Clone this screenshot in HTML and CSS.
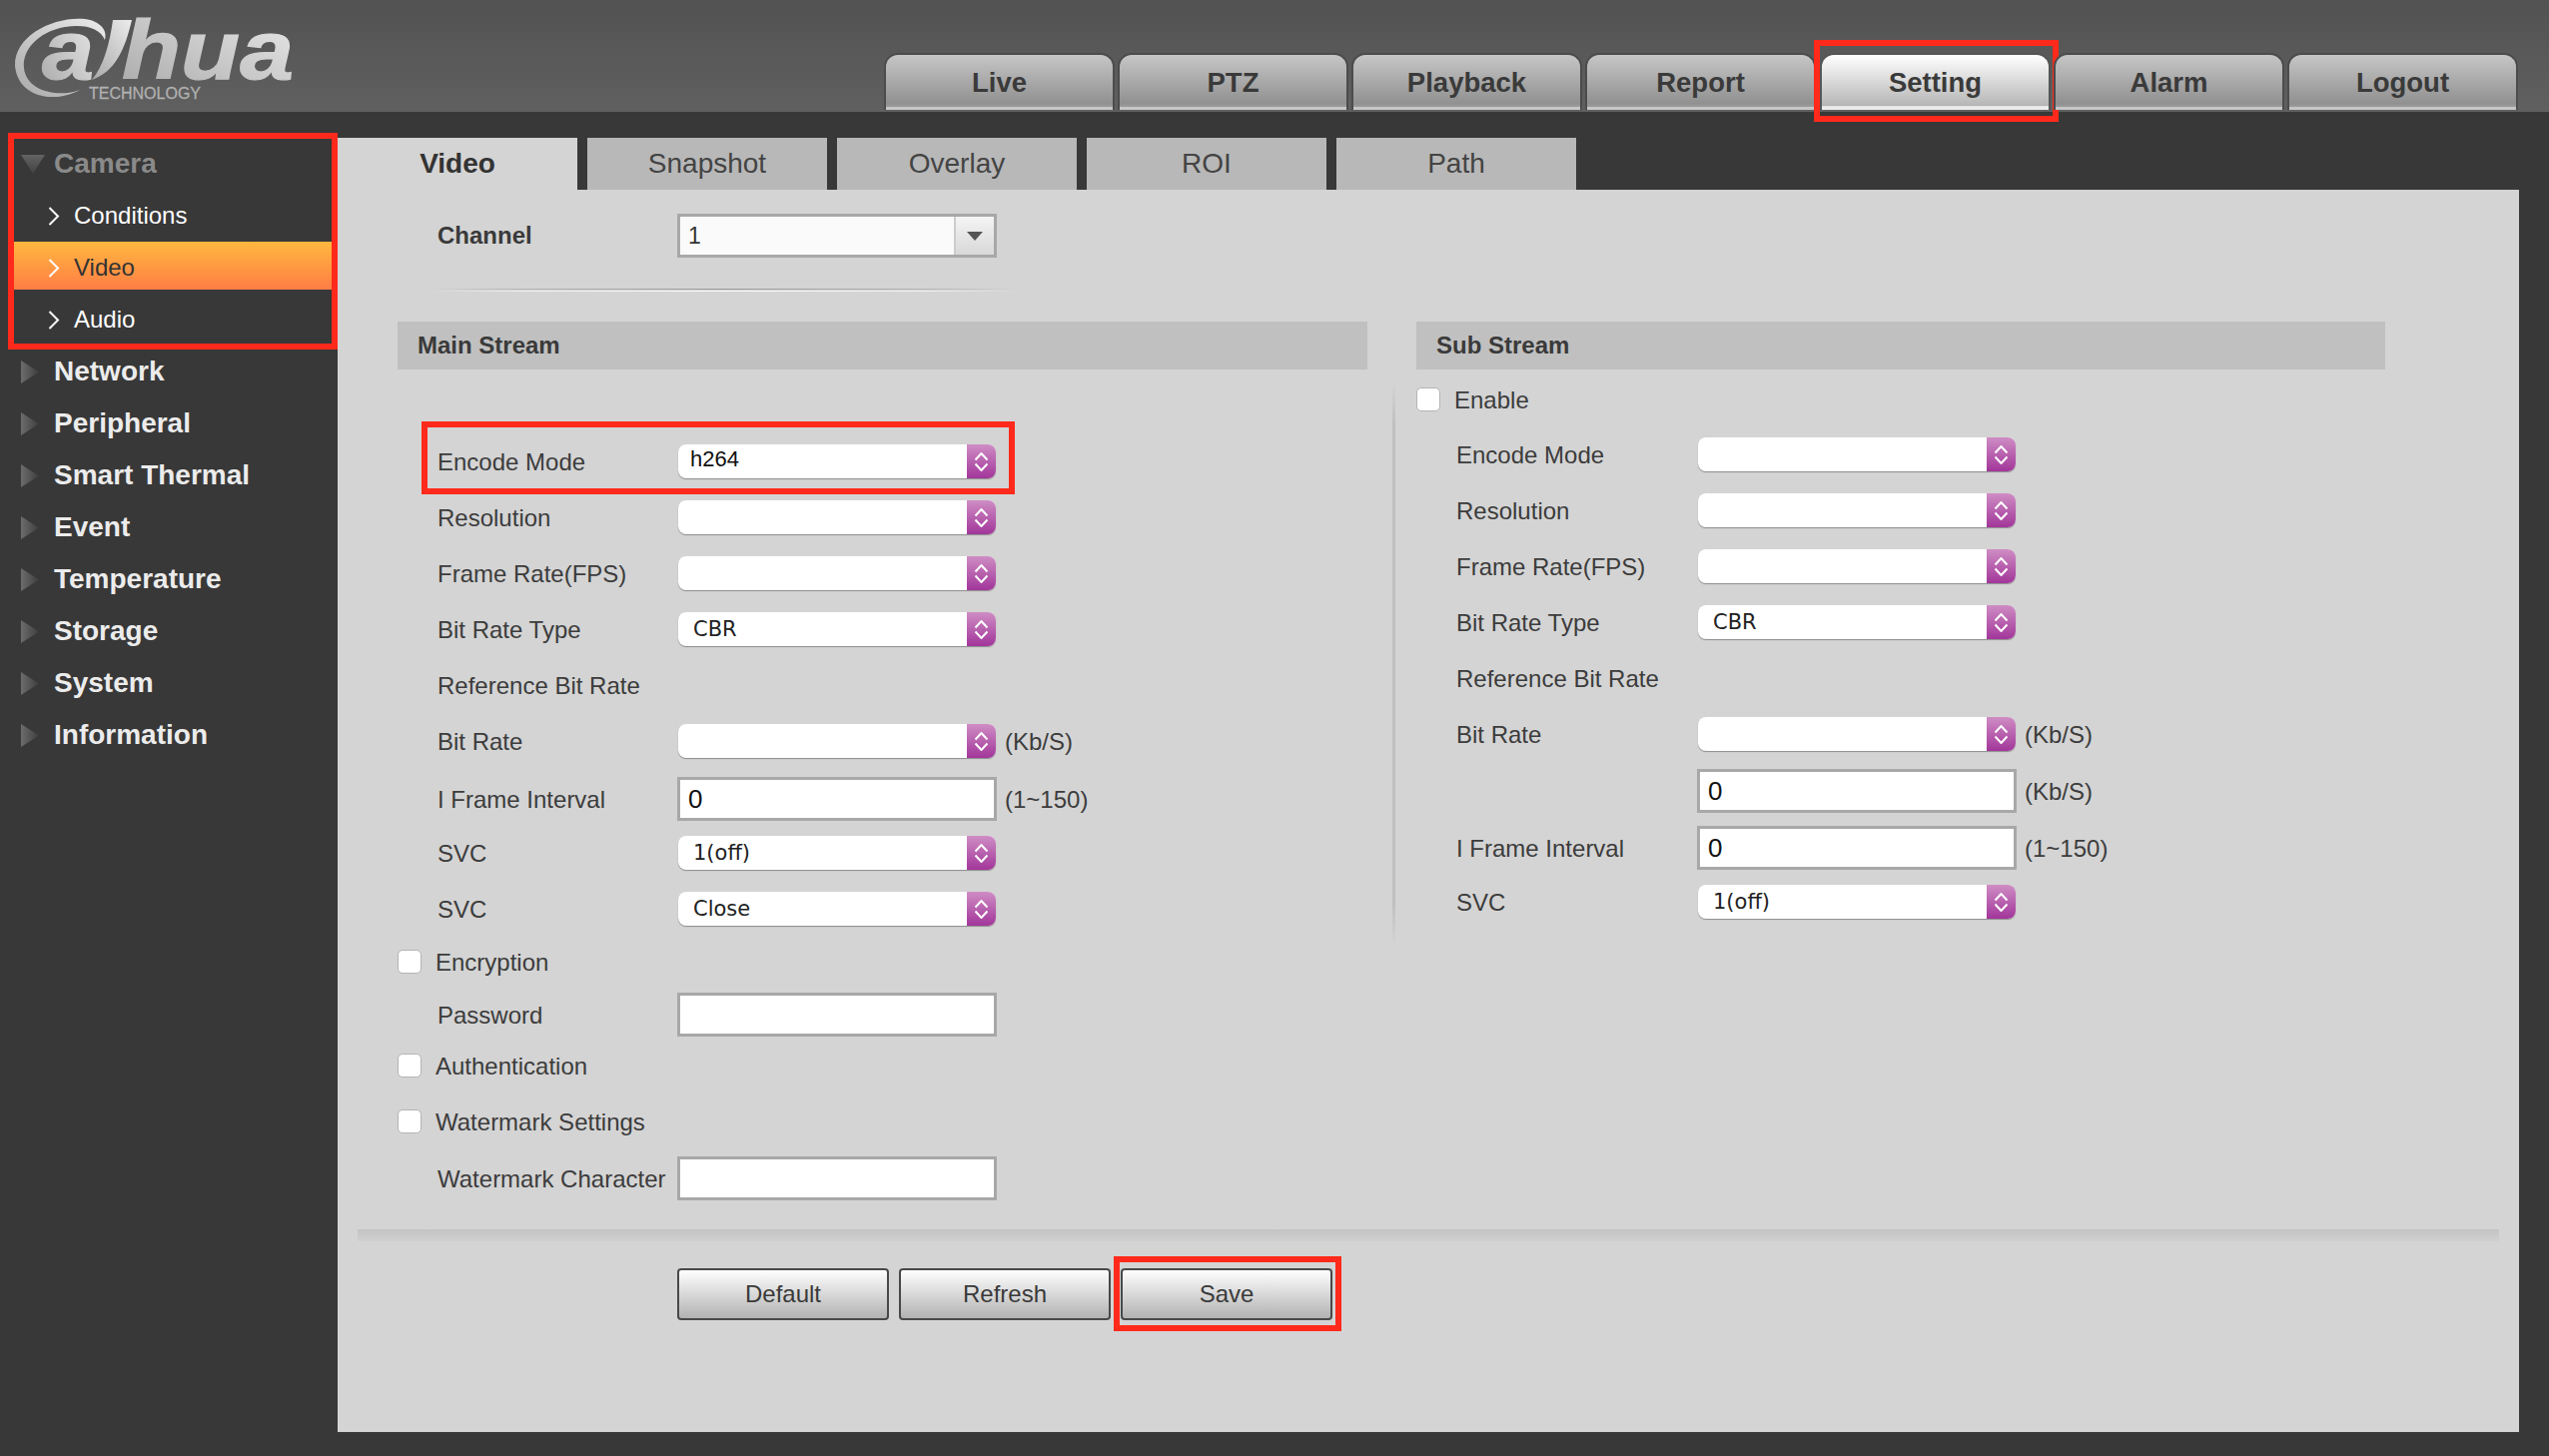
FILE: index.html
```html
<!DOCTYPE html>
<html lang="en">
<head>
  <meta charset="UTF-8">
  <title>Setting</title>
  <link rel="stylesheet" href="styles.css">
</head>
<body>
  <svg class="defs" width="0" height="0">
    <defs>
      <linearGradient id="logoFill" x1="0" y1="1" x2="1" y2="0">
        <stop offset="0" stop-color="#a8a8a8"/>
        <stop offset="1" stop-color="#ececec"/>
      </linearGradient>
      <linearGradient id="triRight" x1="0" y1="0" x2="1" y2="0">
        <stop offset="0" stop-color="#6c6c6c"/>
        <stop offset="1" stop-color="#3e3e3e"/>
      </linearGradient>
      <linearGradient id="triDown" x1="0" y1="0" x2="0" y2="1">
        <stop offset="0" stop-color="#626262"/>
        <stop offset="1" stop-color="#424242"/>
      </linearGradient>
      <symbol id="updown" viewBox="0 0 13 19">
        <path d="M.5 7.5 6.5 1 12.5 7.5M.5 11.5 6.5 18 12.5 11.5" fill="none" stroke="#fff" stroke-width="2"/>
      </symbol>
      <symbol id="chev" viewBox="0 0 12 19">
        <path d="M1.5 1 10 9.5 1.5 18" fill="none" stroke="currentColor" stroke-width="2"/>
      </symbol>
      <symbol id="triR" viewBox="0 0 18 23">
        <path d="M0 0 18 11.5 0 23Z" fill="url(#triRight)"/>
      </symbol>
    </defs>
  </svg>

  <header class="top">
    <svg class="logo" width="310" height="112" viewBox="0 0 310 112">
      <path d="M80 90C55 104 18 98 15 66 14 35 55 16 85 19 100 21 108 30 105 40 100 28 85 24 65 27 38 32 22 50 24 68 26 92 60 98 80 90Z" fill="url(#logoFill)"/>
      <path d="M113 20H132C125 50 115 72 92 80 104 66 110 42 113 20Z" fill="url(#logoFill)"/>
      <text class="logoWord" x="42" y="79" textLength="52" lengthAdjust="spacingAndGlyphs">a</text>
      <text class="logoWord" x="122" y="79" textLength="172" lengthAdjust="spacingAndGlyphs">hua</text>
      <text class="logoSub" x="89" y="99" textLength="112" lengthAdjust="spacingAndGlyphs">TECHNOLOGY</text>
    </svg>
    <nav class="topTabs">
      <div class="topTab">Live</div>
      <div class="topTab">PTZ</div>
      <div class="topTab">Playback</div>
      <div class="topTab">Report</div>
      <div class="topTab topTabOn">Setting</div>
      <div class="topTab">Alarm</div>
      <div class="topTab">Logout</div>
    </nav>
  </header>

  <div class="main">
    <aside class="side">
      <div class="sideGroup">
        <div class="sideItem sideItemOpen">
          <svg class="tri" width="24" height="19" viewBox="0 0 24 19"><path d="M0 0H24L12 19Z" fill="url(#triDown)"/></svg>
          Camera
        </div>
        <div class="subItem"><svg class="chev" width="12" height="19"><use href="#chev"/></svg>Conditions</div>
        <div class="subItem subItemOn"><svg class="chev" width="12" height="19"><use href="#chev"/></svg>Video</div>
        <div class="subItem"><svg class="chev" width="12" height="19"><use href="#chev"/></svg>Audio</div>
      </div>
      <div class="sideItem"><svg class="tri" width="18" height="23"><use href="#triR"/></svg>Network</div>
      <div class="sideItem"><svg class="tri" width="18" height="23"><use href="#triR"/></svg>Peripheral</div>
      <div class="sideItem"><svg class="tri" width="18" height="23"><use href="#triR"/></svg>Smart Thermal</div>
      <div class="sideItem"><svg class="tri" width="18" height="23"><use href="#triR"/></svg>Event</div>
      <div class="sideItem"><svg class="tri" width="18" height="23"><use href="#triR"/></svg>Temperature</div>
      <div class="sideItem"><svg class="tri" width="18" height="23"><use href="#triR"/></svg>Storage</div>
      <div class="sideItem"><svg class="tri" width="18" height="23"><use href="#triR"/></svg>System</div>
      <div class="sideItem"><svg class="tri" width="18" height="23"><use href="#triR"/></svg>Information</div>
    </aside>

    <section class="content">
      <div class="pageTabs">
        <div class="pageTab pageTabOn">Video</div>
        <div class="pageTab">Snapshot</div>
        <div class="pageTab">Overlay</div>
        <div class="pageTab">ROI</div>
        <div class="pageTab">Path</div>
      </div>

      <div class="panel">
        <div class="channelRow">
          <div class="channelLabel">Channel</div>
          <div class="combo">
            <span class="comboVal">1</span>
            <span class="comboBtn"></span>
          </div>
        </div>
        <div class="rule"></div>

        <div class="streams">
          <div class="stream">
            <div class="streamHead">Main Stream</div>
            <div class="streamBody">
              <div class="row rowMarked">
                <label class="lbl">Encode Mode</label>
                <div class="sel"><span class="selVal selValPlain">h264</span><span class="selBtn"><svg width="13" height="19"><use href="#updown"/></svg></span></div>
              </div>
              <div class="row">
                <label class="lbl">Resolution</label>
                <div class="sel"><span class="selVal"></span><span class="selBtn"><svg width="13" height="19"><use href="#updown"/></svg></span></div>
              </div>
              <div class="row">
                <label class="lbl">Frame Rate(FPS)</label>
                <div class="sel"><span class="selVal"></span><span class="selBtn"><svg width="13" height="19"><use href="#updown"/></svg></span></div>
              </div>
              <div class="row">
                <label class="lbl">Bit Rate Type</label>
                <div class="sel"><span class="selVal">CBR</span><span class="selBtn"><svg width="13" height="19"><use href="#updown"/></svg></span></div>
              </div>
              <div class="row">
                <label class="lbl">Reference Bit Rate</label>
              </div>
              <div class="row">
                <label class="lbl">Bit Rate</label>
                <div class="sel"><span class="selVal"></span><span class="selBtn"><svg width="13" height="19"><use href="#updown"/></svg></span></div>
                <span class="unit">(Kb/S)</span>
              </div>
              <div class="row rowDown">
                <label class="lbl">I Frame Interval</label>
                <div class="txt">0</div>
                <span class="unit">(1~150)</span>
              </div>
              <div class="row">
                <label class="lbl">SVC</label>
                <div class="sel"><span class="selVal">1(off)</span><span class="selBtn"><svg width="13" height="19"><use href="#updown"/></svg></span></div>
              </div>
              <div class="row">
                <label class="lbl">SVC</label>
                <div class="sel"><span class="selVal">Close</span><span class="selBtn"><svg width="13" height="19"><use href="#updown"/></svg></span></div>
              </div>
              <div class="row rowCheck">
                <span class="check"></span><label class="checkLbl">Encryption</label>
              </div>
              <div class="row rowDown">
                <label class="lbl">Password</label>
                <div class="txt"></div>
              </div>
              <div class="row rowCheck rowAuth">
                <span class="check"></span><label class="checkLbl">Authentication</label>
              </div>
              <div class="row rowCheck rowMark">
                <span class="check"></span><label class="checkLbl">Watermark Settings</label>
              </div>
              <div class="row rowDown">
                <label class="lbl">Watermark Character</label>
                <div class="txt"></div>
              </div>
            </div>
          </div>

          <div class="stream">
            <div class="streamHead">Sub Stream</div>
            <div class="streamBody streamBodySub">
              <div class="row rowCheck rowEnable">
                <span class="check"></span><label class="checkLbl">Enable</label>
              </div>
              <div class="row">
                <label class="lbl">Encode Mode</label>
                <div class="sel"><span class="selVal"></span><span class="selBtn"><svg width="13" height="19"><use href="#updown"/></svg></span></div>
              </div>
              <div class="row">
                <label class="lbl">Resolution</label>
                <div class="sel"><span class="selVal"></span><span class="selBtn"><svg width="13" height="19"><use href="#updown"/></svg></span></div>
              </div>
              <div class="row">
                <label class="lbl">Frame Rate(FPS)</label>
                <div class="sel"><span class="selVal"></span><span class="selBtn"><svg width="13" height="19"><use href="#updown"/></svg></span></div>
              </div>
              <div class="row">
                <label class="lbl">Bit Rate Type</label>
                <div class="sel"><span class="selVal">CBR</span><span class="selBtn"><svg width="13" height="19"><use href="#updown"/></svg></span></div>
              </div>
              <div class="row">
                <label class="lbl">Reference Bit Rate</label>
              </div>
              <div class="row">
                <label class="lbl">Bit Rate</label>
                <div class="sel"><span class="selVal"></span><span class="selBtn"><svg width="13" height="19"><use href="#updown"/></svg></span></div>
                <span class="unit">(Kb/S)</span>
              </div>
              <div class="row rowTall">
                <label class="lbl"></label>
                <div class="txt">0</div>
                <span class="unit">(Kb/S)</span>
              </div>
              <div class="row">
                <label class="lbl">I Frame Interval</label>
                <div class="txt">0</div>
                <span class="unit">(1~150)</span>
              </div>
              <div class="row rowShort">
                <label class="lbl">SVC</label>
                <div class="sel"><span class="selVal">1(off)</span><span class="selBtn"><svg width="13" height="19"><use href="#updown"/></svg></span></div>
              </div>
            </div>
          </div>
        </div>

        <div class="band"></div>

        <div class="actions">
          <button class="btn">Default</button>
          <button class="btn">Refresh</button>
          <button class="btn btnMarked">Save</button>
        </div>
      </div>
    </section>
  </div>
</body>
</html>
```

FILE: styles.css
```css
html, body {
  margin: 0;
  padding: 0;
  width: 2552px;
  height: 1458px;
  background-color: #383838;
  overflow: hidden;
  font-family: "Liberation Sans", Arial, sans-serif;
}

.defs {
  display: block;
  height: 0;
}

/* header */
.top {
  height: 112px;
  display: flex;
  justify-content: space-between;
  align-items: flex-end;
  background: linear-gradient(to bottom, #525252, #606060);
  padding: 0 31px 2px 0;
  box-sizing: border-box;
}

.logo {
  display: block;
  align-self: flex-start;
}

.logoWord {
  font-family: "Liberation Sans", Arial, sans-serif;
  font-weight: bold;
  font-style: italic;
  font-size: 84px;
  fill: url(#logoFill);
  stroke: url(#logoFill);
  stroke-width: 1.2px;
}

.logoSub {
  font-family: "Liberation Sans", Arial, sans-serif;
  font-size: 16px;
  fill: #b0b0b0;
  stroke: #b0b0b0;
  stroke-width: 0.3px;
}

.topTabs {
  display: flex;
  gap: 3px;
}

.topTab {
  position: relative;
  width: 231px;
  height: 57px;
  box-sizing: border-box;
  padding-top: 1px;
  display: flex;
  align-items: center;
  justify-content: center;
  border: 2px solid #4c4c4c;
  border-bottom: 0;
  border-radius: 14px 14px 0 0;
  background: linear-gradient(to bottom, #c6c6c6, #919191 88%, #9a9a9a 94%, #c6c6c6 94%, #c6c6c6);
  color: #3a3a3a;
  font-size: 27.5px;
  font-weight: bold;
}

.topTabOn {
  margin-left: 1px;
  background: linear-gradient(to bottom, #ffffff, #b6b6b6 92%, #ececec 94%, #ececec);
  border-color: #555;
}

.topTabOn::after {
  content: "";
  position: absolute;
  inset: -15px -10px -12px -8px;
  border: 6px solid #ff2a1b;
}

/* layout */
.main {
  display: flex;
  padding-top: 26px;
}

.side {
  width: 338px;
  flex: none;
}

.sideGroup {
  position: relative;
}

.sideGroup::after {
  content: "";
  position: absolute;
  inset: -5px 0 -4px 8px;
  border: 6px solid #ff2a1b;
}

.sideItem {
  height: 52px;
  display: flex;
  align-items: center;
  padding-left: 21px;
  color: #ececec;
  font-size: 28px;
  font-weight: bold;
}

.sideItemOpen {
  color: #8a8a8a;
}

.tri {
  flex: none;
  margin-right: 15px;
}

.sideItemOpen .tri {
  margin-right: 9px;
}

.subItem {
  height: 52px;
  margin: 0 6px 0 14px;
  padding-left: 34px;
  display: flex;
  align-items: center;
  color: #fff;
  font-size: 24px;
}

.subItemOn {
  color: #333;
  background: linear-gradient(to bottom, #ffb83f, #ff7d45) 0 0 / 100% 48px no-repeat;
}

.chev {
  flex: none;
  margin-right: 14px;
  color: #fff;
}

.content {
  width: 2184px;
}

.pageTabs {
  display: flex;
  gap: 10px;
}

.pageTab {
  width: 240px;
  height: 52px;
  display: flex;
  align-items: center;
  justify-content: center;
  background: #b8b8b8;
  color: #444;
  font-size: 28px;
}

.pageTabOn {
  background: #d4d4d4;
  color: #333;
  font-weight: bold;
}

.panel {
  height: 1244px;
  background: #d4d4d4;
  padding-top: 24px;
  box-sizing: border-box;
}

/* channel */
.channelRow {
  display: flex;
  align-items: center;
  padding-left: 100px;
}

.channelLabel {
  width: 240px;
  color: #3a3a3a;
  font-size: 24px;
  font-weight: bold;
}

.combo {
  width: 320px;
  height: 44px;
  box-sizing: border-box;
  display: flex;
  border: 3px solid #a8a8a8;
  background: #fafafa;
}

.comboVal {
  flex: 1;
  padding-left: 8px;
  font-size: 23px;
  line-height: 38px;
  color: #333;
}

.comboBtn {
  width: 38px;
  border-left: 2px solid #ccc;
  background: linear-gradient(to bottom, #f4f4f4, #d8d8d8);
  position: relative;
}

.comboBtn::after {
  content: "";
  position: absolute;
  left: 11px;
  top: 15px;
  border-left: 8px solid transparent;
  border-right: 8px solid transparent;
  border-top: 9px solid #555;
}

.rule {
  width: 586px;
  height: 3px;
  margin: 31px 0 30px 94px;
  background:
    linear-gradient(to right, transparent, #b4b4b4 15%, #999 50%, #b4b4b4 85%, transparent) 0 0 / 100% 1px no-repeat,
    linear-gradient(to right, transparent, #eee 15%, #f8f8f8 50%, #eee 85%, transparent) 0 2px / 100% 1px no-repeat;
}

/* streams */
.streams {
  display: flex;
  gap: 49px;
  padding-left: 60px;
  height: 909px;
}

.stream {
  width: 971px;
}

.stream + .stream {
  width: 970px;
}

.streamHead {
  height: 48px;
  display: flex;
  align-items: center;
  padding-left: 20px;
  background: #c0c0c0;
  color: #3a3a3a;
  font-size: 24px;
  font-weight: bold;
}

.streamBody {
  padding-top: 64px;
}

.streamBodySub {
  margin-left: -24px;
  padding: 6px 0 0 24px;
  min-height: 572px;
  background: linear-gradient(to bottom, transparent, #c0c0c0 8%, #c0c0c0 92%, transparent) 0 12px / 3px 566px no-repeat;
}

.row {
  height: 56px;
  display: flex;
  align-items: center;
}

.rowDown {
  box-sizing: border-box;
  padding-top: 4px;
}

.rowMarked {
  position: relative;
}

.rowMarked::after {
  content: "";
  position: absolute;
  left: 24px;
  top: -12px;
  bottom: -5px;
  width: 594px;
  box-sizing: border-box;
  border: 6px solid #ff2a1b;
}

.rowCheck {
  height: 48px;
  box-sizing: border-box;
  padding-top: 2px;
}

.rowAuth {
  margin-bottom: 4px;
}

.rowMark {
  height: 56px;
}

.rowEnable {
  margin-bottom: 3px;
  padding-top: 0;
}

.rowTall {
  height: 58px;
}

.rowShort {
  height: 52px;
}

.lbl {
  width: 240px;
  margin-left: 40px;
  padding-top: 2px;
  flex: none;
  color: #3c3c3c;
  font-size: 24px;
  white-space: nowrap;
}

.streamBodySub .lbl {
  width: 241px;
}

.checkLbl {
  margin-left: 14px;
  padding-top: 1px;
  color: #3c3c3c;
  font-size: 24px;
}

.check {
  width: 24px;
  height: 24px;
  box-sizing: border-box;
  border: 1px solid #b4b4b4;
  border-radius: 5px;
  background: #fff;
}

.sel {
  width: 318px;
  height: 34px;
  margin: 0 1px;
  flex: none;
  display: flex;
  border-radius: 8px;
  background: #fff;
  box-shadow: 0 1px 1px #8c8c8c;
  overflow: hidden;
}

.selVal {
  flex: 1;
  padding-left: 15px;
  font-family: "DejaVu Sans", sans-serif;
  font-size: 21px;
  line-height: 35px;
  color: #222;
}

.selValPlain {
  padding-left: 12px;
  font-family: "Liberation Sans", Arial, sans-serif;
  font-size: 22px;
  line-height: 30px;
  color: #111;
}

.selBtn {
  width: 29px;
  display: flex;
  align-items: center;
  justify-content: center;
  background: linear-gradient(to bottom, #cf8dc4, #a2369a);
}

.txt {
  width: 320px;
  height: 44px;
  flex: none;
  box-sizing: border-box;
  border: 3px solid #a8a8a8;
  background: #fff;
  padding-left: 8px;
  font-size: 26px;
  line-height: 38px;
  color: #111;
}

.unit {
  margin-left: 8px;
  padding-top: 2px;
  color: #3c3c3c;
  font-size: 24px;
}

/* bottom */
.band {
  height: 12px;
  margin: 0 20px;
  background: linear-gradient(to bottom, #c4c4c4, #d0d0d0);
}

.actions {
  display: flex;
  gap: 10px;
  padding: 27px 0 0 340px;
}

.btn {
  position: relative;
  width: 212px;
  height: 52px;
  box-sizing: border-box;
  border: 2px solid #484848;
  border-radius: 4px;
  background: linear-gradient(to bottom, #fff, #b2b2b2);
  color: #3a3a3a;
  font-family: "Liberation Sans", Arial, sans-serif;
  font-size: 24px;
  padding: 0;
}

.btnMarked::after {
  content: "";
  position: absolute;
  inset: -14px -11px -13px -9px;
  border: 6px solid #ff2a1b;
}
```
